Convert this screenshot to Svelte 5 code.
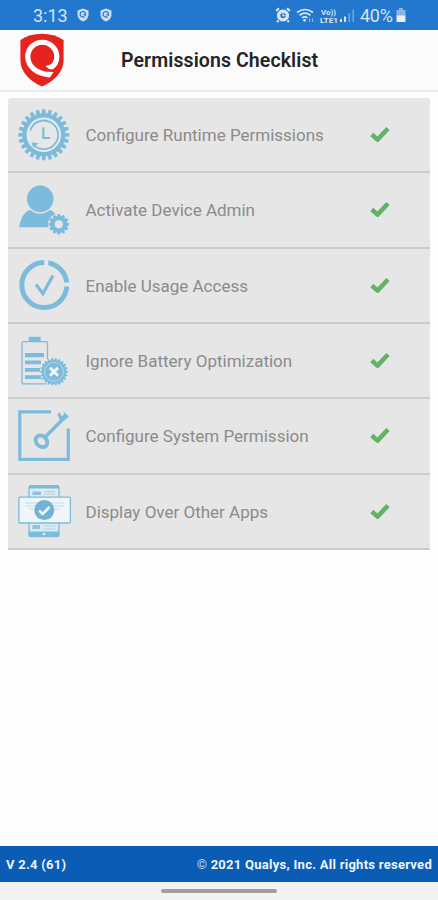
<script lang="ts">
    type Item = { icon: string; label: string };

    const items: Item[] = [
        { icon: 'runtime', label: 'Configure Runtime Permissions' },
        { icon: 'admin', label: 'Activate Device Admin' },
        { icon: 'usage', label: 'Enable Usage Access' },
        { icon: 'battery', label: 'Ignore Battery Optimization' },
        { icon: 'system', label: 'Configure System Permission' },
        { icon: 'overlay', label: 'Display Over Other Apps' },
    ];

    // outline of a cog with flat teeth
    const cog = (cx: number, cy: number, outer: number, inner: number, teeth: number) => {
        const step = (Math.PI * 2) / teeth;
        const points: string[] = [];
        const add = (r: number, a: number) =>
            points.push(`${(cx + r * Math.cos(a)).toFixed(2)},${(cy + r * Math.sin(a)).toFixed(2)}`);
        for (let i = 0; i < teeth; i++) {
            const a = i * step;
            add(inner, a - step * 0.36);
            add(outer, a - step * 0.24);
            add(outer, a + step * 0.24);
            add(inner, a + step * 0.36);
        }
        return points.join(' ');
    };
</script>

{#snippet badge()}
    <svg class="badge" viewBox="0 0 12 14">
        <path d="M6 .5 11.5 2.4V7C11.5 10 9 12.3 6 13.5 3 12.3.5 10 .5 7V2.4Z" fill="#c9def3" />
        <path d="M7.6 9.3 6 8.9a2.7 2.7 0 1 1 2.3-1.6L6.4 6.5" fill="none" stroke="#2377cd" stroke-width="1.2" />
    </svg>
{/snippet}

<div class="screen">
    <div class="status">
        <span class="time">3:13</span>
        {@render badge()}
        {@render badge()}
        <span class="fill"></span>
        <svg class="tray" viewBox="0 0 80 18">
            <g fill="none" stroke="#d6e7f7">
                <circle cx="8" cy="9.5" r="4.4" stroke-width="3.4" />
                <path d="M1.2 5 4 2.3M14.8 5 12 2.3M3.5 14.5 2 16M12.5 14.5 14 16" stroke-width="2.2" />
                <path d="M8 6.6V9.7H10.3" stroke-width="1.1" />
                <path d="M22 6.5Q30 .5 38 6.5M24.5 9.3Q30 5 35.5 9.3M27 12Q30 9.6 32.5 12" stroke-width="1.6" />
                <path d="M34.5 12.5V16M37.5 12.5V16" stroke-width="1.2" opacity=".6" />
            </g>
            <circle cx="29.6" cy="14.3" r="1.4" fill="#d6e7f7" />
            <text x="46" y="8.5" textLength="15" lengthAdjust="spacingAndGlyphs">Vo))</text>
            <text x="45" y="16.5" textLength="18" lengthAdjust="spacingAndGlyphs">LTE1</text>
            <path d="M65 13h2v3h-2zM69 10.5h2V16h-2z" fill="#d6e7f7" />
            <path d="M73.5 7H75v9h-1.5zM77.5 3.5H79V16h-1.5z" fill="#73a8de" />
        </svg>
        <span class="percent">40%</span>
        <svg class="cell" viewBox="0 0 10 15">
            <path d="M3 0H7V2H9.5V8H.5V2H3Z" fill="#8ab6e4" />
            <path d="M.5 7.5H9.5V14H.5Z" fill="#e4eff9" />
        </svg>
    </div>

    <header>
        <svg class="logo" viewBox="0 0 46 54">
            <path d="M23 .8C31 .8 38 3 44.6 7V27C44.6 39.5 34.5 48.5 23 53.5 11.5 48.5 1.4 39.5 1.4 27V7C8 3 15 .8 23 .8Z" fill="#e5231f" />
            <path d="M31.5 34.5C35.5 32.5 37.8 28.5 37.8 23.5A14.5 14.5 0 1 0 8.8 24C9 33.5 18 41.2 31 41.6" fill="none" stroke="#fff" stroke-width="5.2" />
            <path d="M28 38.8 34.6 39 31 44.2H28Z" fill="#fff" />
            <path d="M26.5 33.2 31 31.6 34.6 35.8 30.5 36.2Z" fill="#fff" />
        </svg>
        <h1>Permissions Checklist</h1>
    </header>

    <ul class="list">
        {#each items as item}
            <li>
                <svg class="icon" viewBox="0 0 56 56">
                    {#if item.icon === 'runtime'}
                        <polygon points={cog(26.8, 27.8, 25.6, 21.5, 24)} fill="#7dbbdd" />
                        <circle cx="26.8" cy="27.8" r="17.3" fill="#e6e7e8" />
                        <path d="M17.5 38.7A14.3 14.3 0 1 0 12.7 25.5" transform="rotate(8 26.8 27.8)" fill="none" stroke="#7dbbdd" stroke-width="1.8" />
                        <path d="M26.3 20.5V31H33" fill="none" stroke="#7dbbdd" stroke-width="2.2" />
                        <path d="M14.5 35.5 21.5 36 16.5 41Z" fill="#7dbbdd" />
                    {:else if item.icon === 'admin'}
                        <path d="M2.3 45.2C3 37 7.5 29.5 13 27.7Q23 35.5 33 27.7C37 29.5 40 33 42 38V45.2Z" fill="#7dbbdd" />
                        <circle cx="23.2" cy="16.8" r="13.3" fill="#7dbbdd" />
                        <circle cx="41.8" cy="42.3" r="10.8" fill="#e6e7e8" />
                        <polygon points={cog(41.8, 42.3, 10.3, 8.5, 12)} fill="#7dbbdd" />
                        <circle cx="41.8" cy="42.3" r="4" fill="#e6e7e8" />
                    {:else if item.icon === 'usage'}
                        <circle cx="27.3" cy="28" r="22.5" fill="none" stroke="#7dbbdd" stroke-width="5" />
                        <path d="M29.3 1V11M44 27.5H54" stroke="#e6e7e8" stroke-width="4" />
                        <path d="M19 27.4 25.9 36.5 36 18.5" fill="none" stroke="#7dbbdd" stroke-width="3.2" />
                    {:else if item.icon === 'battery'}
                        <path d="M11.7 3.8H23.7V8.5H11.7Z" fill="#7dbbdd" />
                        <rect x="5" y="8.7" width="25.5" height="42.2" rx="1.5" fill="none" stroke="#7dbbdd" stroke-width="1.3" />
                        <path d="M8 20H27V24.2H8ZM8 27.5H24V31.2H8ZM8 35H23V38.7H8ZM8 42.3H26V46H8Z" fill="#7dbbdd" />
                        <circle cx="37" cy="38.8" r="14" fill="#e6e7e8" />
                        <polygon points={cog(37, 38.8, 13.8, 12, 22)} fill="#7dbbdd" />
                        <circle cx="37" cy="38.8" r="9.4" fill="none" stroke="#b9d8e7" stroke-width="1" />
                        <path d="M33 34.8 41 42.8M41 34.8 33 42.8" stroke="#f0f5f8" stroke-width="3" />
                    {:else if item.icon === 'system'}
                        <path d="M34 3.8H2.8V51.3H51.3V20.5" fill="none" stroke="#7dbbdd" stroke-width="3.2" />
                        <ellipse cx="24.5" cy="33.3" rx="6.5" ry="5.2" transform="rotate(45 24.5 33.3)" fill="none" stroke="#7dbbdd" stroke-width="3.8" />
                        <path d="M28.5 28.7 49.5 7.5" fill="none" stroke="#7dbbdd" stroke-width="3.6" />
                        <path d="M42.5 4 44.5 8 47 6.5 46.5 3.5 52 8.5 46.5 13 43 12 40.5 7Z" fill="#7dbbdd" />
                    {:else}
                        <rect x="12" y="2.6" width="30" height="51" rx="2" fill="#dcebf2" stroke="#7dbbdd" stroke-width="1.3" />
                        <path d="M12 2.6H42V5.5H12ZM12 48.5H42V53.6H12Z" fill="#7dbbdd" />
                        <path d="M15.5 8.5H24V12H15.5ZM15.5 42H23V46H15.5Z" fill="#8fc4e0" />
                        <path d="M27 8.5H38M27 11H38M27 43H38M27 46H38" stroke="#abd2e5" stroke-width="1" />
                        <rect x="1.9" y="14.2" width="51.5" height="25.8" rx="1" fill="#f0f5f8" stroke="#7dbbdd" stroke-width="1.3" />
                        <path d="M8 20H47M8 23H47M12 26H42" stroke="#c4dfec" stroke-width="1.2" />
                        <circle cx="27.3" cy="27.1" r="10" fill="#71b3d8" />
                        <path d="M22 27.5 25.7 31 32.5 24" fill="none" stroke="#f4f9fc" stroke-width="2.6" />
                        <circle cx="27" cy="51" r="1.3" fill="#eaf3f8" />
                    {/if}
                </svg>
                <span class="label">{item.label}</span>
                <svg class="tick" viewBox="0 0 20 17">
                    <path d="M1.8 8.5 7.5 13.6 18 2.5" />
                </svg>
            </li>
        {/each}
    </ul>

    <footer>
        <span class="version">V 2.4 (61)</span>
        <span class="copy"><span class="mark">©</span> 2021 Qualys, Inc. All rights reserved</span>
    </footer>
    <div class="nav"><span class="handle"></span></div>
</div>

<style>
    :global(body) {
        margin: 0;
    }
    .screen {
        width: 438px;
        height: 900px;
        display: flex;
        flex-direction: column;
        background: #fefefe;
        font-family: Roboto, "Liberation Sans", sans-serif;
        overflow: hidden;
    }
    .status {
        height: 30px;
        box-sizing: border-box;
        padding: 0 32px 0 33px;
        display: flex;
        align-items: center;
        flex-shrink: 0;
        background: #2377cd;
        color: #d3e5f6;
        font-size: 18px;
    }
    .time {
        width: 44px;
    }
    .badge {
        width: 12px;
        height: 14px;
        margin-right: 11px;
    }
    .fill {
        flex: 1;
    }
    .tray {
        width: 80px;
        height: 18px;
        margin-right: 5px;
    }
    .tray text {
        font-size: 8px;
        font-weight: bold;
        fill: #d6e7f7;
    }
    .percent {
        width: 35px;
        white-space: nowrap;
        letter-spacing: -0.3px;
    }
    .cell {
        width: 10px;
        height: 15px;
        margin-left: 1px;
    }
    header {
        height: 62px;
        box-sizing: border-box;
        flex-shrink: 0;
        display: flex;
        align-items: center;
        padding-left: 19px;
        background: #fbfbfb;
        border-bottom: 2px solid #ebebeb;
    }
    .logo {
        width: 46px;
        height: 54px;
    }
    h1 {
        margin: 1px 0 0 56px;
        font-size: 19.5px;
        font-weight: 600;
        letter-spacing: 0.1px;
        color: #242424;
        white-space: nowrap;
    }
    .list {
        flex: 1;
        list-style: none;
        margin: 6px 8px 0;
        padding: 0;
    }
    li {
        height: 75.33px;
        box-sizing: border-box;
        display: flex;
        align-items: center;
        padding: 0 40px 0 9px;
        background: #e6e6e6;
        border-bottom: 2.5px solid #cbcbcb;
    }
    li:first-child {
        border-radius: 3px 3px 0 0;
    }
    .icon {
        width: 56px;
        height: 56px;
        flex-shrink: 0;
    }
    .label {
        flex: 1;
        margin: 1px 0 0 12.5px;
        font-size: 17px;
        color: #8b8b8b;
        white-space: nowrap;
    }
    .tick {
        width: 20px;
        height: 17px;
    }
    .tick path {
        fill: none;
        stroke: #64b168;
        stroke-width: 4.6;
        stroke-linejoin: round;
    }
    footer {
        height: 36px;
        flex-shrink: 0;
        display: flex;
        align-items: center;
        justify-content: space-between;
        padding: 0 6px;
        background: #0a5cb5;
        color: #eef5fc;
        font-size: 13px;
        font-weight: bold;
        letter-spacing: 0.27px;
        white-space: nowrap;
    }
    .mark {
        color: #bcd4ee;
    }
    .nav {
        height: 18px;
        flex-shrink: 0;
        display: flex;
        align-items: center;
        justify-content: center;
        background: #f3f3f3;
    }
    .handle {
        width: 116px;
        height: 4px;
        border-radius: 2px;
        background: #a0a0a0;
    }
</style>
